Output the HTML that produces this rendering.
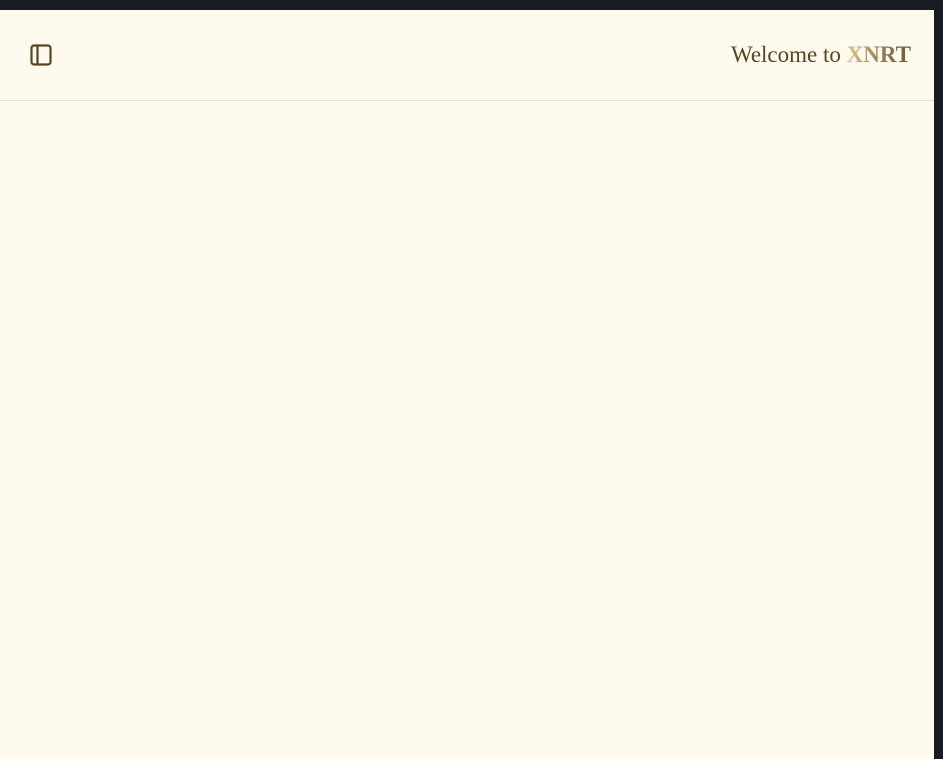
<!DOCTYPE html>
<html><head><meta charset="utf-8"><style>
html,body{margin:0;padding:0;width:943px;height:759px;overflow:hidden;background:#1a1c24;}
.main{position:absolute;left:0;top:10px;width:934px;height:749px;background:#fffaee;}
.hdr{position:absolute;left:0;top:0;width:934px;height:90px;border-bottom:1px solid #e4dfd3;}
.icon{position:absolute;left:30px;top:34px;}
.title{position:absolute;right:23px;top:32px;font-family:"Liberation Serif",serif;font-size:23px;color:#5a4320;white-space:nowrap;}
.title b{background:linear-gradient(90deg,#e2c183,#9a8252 50%,#6e5a36);-webkit-background-clip:text;background-clip:text;color:transparent;}
</style></head><body>
<div class="main"><div class="hdr">
<svg class="icon" width="22" height="22" viewBox="0 0 22 22"><rect x="1.5" y="1.5" width="19" height="19" rx="2.5" fill="none" stroke="#5a4320" stroke-width="2.2"/><line x1="7.5" y1="2" x2="7.5" y2="20" stroke="#5a4320" stroke-width="2.2"/></svg>
<div class="title">Welcome to <b>XNRT</b></div>
</div></div>
</body></html>
